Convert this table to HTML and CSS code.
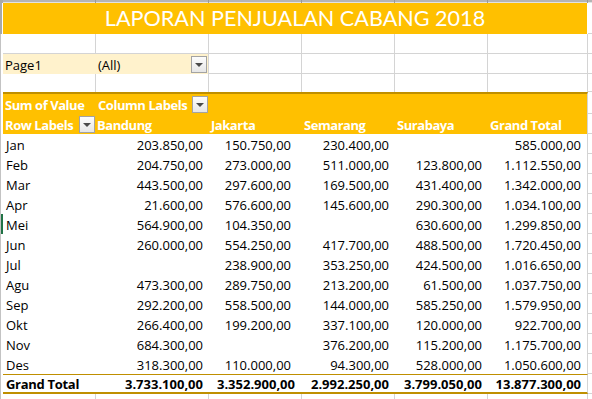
FILE: index.html
```html
<!DOCTYPE html>
<html>
<head>
<meta charset="utf-8">
<title>Laporan Penjualan Cabang 2018</title>
<link rel="stylesheet" href="styles.css">
</head>
<body>
<div class="sheet">
  <div class="r top"><div class="g"></div><div class="c"></div><div class="c"></div><div class="c"></div><div class="c"></div><div class="c"></div><div class="c"></div><div class="c"></div></div>

  <div class="r title"><div class="g"></div><div class="t">LAPORAN PENJUALAN CABANG 2018</div><div class="c x"></div></div>

  <div class="r grid"><div class="g"></div><div class="c"></div><div class="c"></div><div class="c"></div><div class="c"></div><div class="c"></div><div class="c"></div><div class="c x"></div></div>

  <div class="r grid"><div class="g"></div><div class="c cream">Page1</div><div class="c cream cb"><span>(All)</span><span class="btn"></span></div><div class="c"></div><div class="c"></div><div class="c"></div><div class="c"></div><div class="c x"></div></div>

  <div class="r grid r4"><div class="g"></div><div class="c"></div><div class="c"></div><div class="c"></div><div class="c"></div><div class="c"></div><div class="c"></div><div class="c x"></div></div>

  <div class="r h1"><div class="g"></div><div class="c h">Sum of Value</div><div class="c h cb"><span>Column Labels</span><span class="btn"></span></div><div class="c h"></div><div class="c h"></div><div class="c h"></div><div class="c h f"></div><div class="c x"></div></div>

  <div class="r"><div class="g"></div><div class="c h cb"><span>Row Labels</span><span class="btn"></span></div><div class="c h pb">Bandung</div><div class="c h">Jakarta</div><div class="c h">Semarang</div><div class="c h">Surabaya</div><div class="c h f">Grand Total</div><div class="c x"></div></div>

  <div class="r d"><div class="g"></div><div class="c">Jan</div><div class="c n">203.850,00</div><div class="c n">150.750,00</div><div class="c n">230.400,00</div><div class="c n"></div><div class="c n f">585.000,00</div><div class="c x"></div></div>
  <div class="r d"><div class="g"></div><div class="c">Feb</div><div class="c n">204.750,00</div><div class="c n">273.000,00</div><div class="c n">511.000,00</div><div class="c n">123.800,00</div><div class="c n f">1.112.550,00</div><div class="c x"></div></div>
  <div class="r d"><div class="g"></div><div class="c">Mar</div><div class="c n">443.500,00</div><div class="c n">297.600,00</div><div class="c n">169.500,00</div><div class="c n">431.400,00</div><div class="c n f">1.342.000,00</div><div class="c x"></div></div>
  <div class="r d"><div class="g"></div><div class="c">Apr</div><div class="c n">21.600,00</div><div class="c n">576.600,00</div><div class="c n">145.600,00</div><div class="c n">290.300,00</div><div class="c n f">1.034.100,00</div><div class="c x"></div></div>
  <div class="r d"><div class="g sel"></div><div class="c">Mei</div><div class="c n">564.900,00</div><div class="c n">104.350,00</div><div class="c n"></div><div class="c n">630.600,00</div><div class="c n f">1.299.850,00</div><div class="c x"></div></div>
  <div class="r d"><div class="g"></div><div class="c">Jun</div><div class="c n">260.000,00</div><div class="c n">554.250,00</div><div class="c n">417.700,00</div><div class="c n">488.500,00</div><div class="c n f">1.720.450,00</div><div class="c x"></div></div>
  <div class="r d"><div class="g"></div><div class="c">Jul</div><div class="c n"></div><div class="c n">238.900,00</div><div class="c n">353.250,00</div><div class="c n">424.500,00</div><div class="c n f">1.016.650,00</div><div class="c x"></div></div>
  <div class="r d"><div class="g"></div><div class="c">Agu</div><div class="c n">473.300,00</div><div class="c n">289.750,00</div><div class="c n">213.200,00</div><div class="c n">61.500,00</div><div class="c n f">1.037.750,00</div><div class="c x"></div></div>
  <div class="r d"><div class="g"></div><div class="c">Sep</div><div class="c n">292.200,00</div><div class="c n">558.500,00</div><div class="c n">144.000,00</div><div class="c n">585.250,00</div><div class="c n f">1.579.950,00</div><div class="c x"></div></div>
  <div class="r d"><div class="g"></div><div class="c">Okt</div><div class="c n">266.400,00</div><div class="c n">199.200,00</div><div class="c n">337.100,00</div><div class="c n">120.000,00</div><div class="c n f">922.700,00</div><div class="c x"></div></div>
  <div class="r d"><div class="g"></div><div class="c">Nov</div><div class="c n">684.300,00</div><div class="c n"></div><div class="c n">376.200,00</div><div class="c n">115.200,00</div><div class="c n f">1.175.700,00</div><div class="c x"></div></div>
  <div class="r d"><div class="g"></div><div class="c">Des</div><div class="c n">318.300,00</div><div class="c n">110.000,00</div><div class="c n">94.300,00</div><div class="c n">528.000,00</div><div class="c n f">1.050.600,00</div><div class="c x"></div></div>

  <div class="r d gt"><div class="g"></div><div class="c lbl">Grand Total</div><div class="c n">3.733.100,00</div><div class="c n">3.352.900,00</div><div class="c n">2.992.250,00</div><div class="c n">3.799.050,00</div><div class="c n f">13.877.300,00</div><div class="c x"></div></div>

  <div class="r grid last"><div class="g"></div><div class="c"></div><div class="c"></div><div class="c"></div><div class="c"></div><div class="c"></div><div class="c"></div><div class="c x"></div></div>
</div>
</body>
</html>
```

FILE: styles.css
```css
* { box-sizing: border-box; margin: 0; padding: 0; }
html, body { margin: 0; background: #fff; }
body {
  width: 592px;
  height: 399px;
  overflow: hidden;
  font-family: "Open Sans", Lato, sans-serif;
  font-size: 13px;
  color: #000;
}
.sheet { display: flex; flex-direction: column; }

.r {
  display: grid;
  grid-template-columns: 3px 93px 113px 93px 93px 93px 100px 4px;
  height: 20px;
}
.c {
  display: flex;
  align-items: flex-end;
  line-height: 17px;
  padding: 0 2px;
  white-space: nowrap;
  overflow: hidden;
}
.g { background: linear-gradient(90deg, #c3c3c3 0 1px, #fff 1px); }
.g.sel { background: linear-gradient(90deg, #c3c3c3 0 1px, #217346 1px 3px); }

/* top strip (column header edge) */
.top { height: 3px; background: linear-gradient(#b4b4b4 0 2px, #e2e2e2 2px); }
.top .g { background: #a9a9a9; }
.top .c { border-right: 1px solid #999; }

/* title */
.title { height: 31px; }
.title .g { background: linear-gradient(90deg, #a9a9a9 0 2px, #fff 2px); }
.t {
  grid-column: 2 / 8;
  background: #ffc000;
  color: #fff;
  font-family: Lato, "Open Sans", sans-serif;
  font-size: 21.6px;
  line-height: 26px;
  display: flex;
  justify-content: center;
  align-items: flex-end;
  padding-bottom: 3px;
  margin-right: 1px;
}
.x { border-bottom: 1px solid #d4d4d4; }

/* gridded empty rows */
.grid .c { border-right: 1px solid #d4d4d4; border-bottom: 1px solid #d4d4d4; }
.grid .c.x { border-right: 0; }
.r4 { height: 18px; }
.r4 .c { border-bottom: 0; }
.r4 .c.x { border-bottom: 1px solid #d4d4d4; }

.cream { background: #fff2cc; }
.grid .cream { border-right-color: #fff2cc; border-bottom: 0; }
.grid .cream.cb { border-right-color: #d4d4d4; }
.cb { justify-content: space-between; padding-right: 1px; }

/* dropdown button */
.btn {
  width: 16px;
  height: 17px;
  align-self: center;
  border: 1px solid #a3a3a3;
  background: linear-gradient(#fdfdfd, #e6e6e6);
  position: relative;
  flex: none;
}
.btn::after {
  content: "";
  position: absolute;
  left: 3px;
  top: 6px;
  border-left: 4px solid transparent;
  border-right: 4px solid transparent;
  border-top: 4px solid #4a4a4a;
}

/* pivot header */
.h1 { height: 22px; }
.h1 .h { border-top: 2px solid #bf8f00; }
.h { background: #ffc000; color: #fff; font-weight: 700; letter-spacing: -0.45px; }
.pb { padding-left: 1px; }
.f { border-right: 1px solid #d4d4d4; }

/* data */
.d .c:nth-child(2) { padding-left: 3px; }
.n { justify-content: flex-end; padding-right: 6px; }
.d .n:nth-child(4) { padding-right: 11px; }

/* grand total */
.gt { font-weight: 700; }
.gt .c:not(.x) { border-top: 1px solid #bf8f00; border-bottom: 2px solid #bf8f00; line-height: 16px; }
.gt .lbl { padding-left: 2px; letter-spacing: -0.3px; }
.gt .n:nth-child(4) { padding-right: 7px; }

.last { height: 6px; }
.last .c { border-bottom: 0; }
```
